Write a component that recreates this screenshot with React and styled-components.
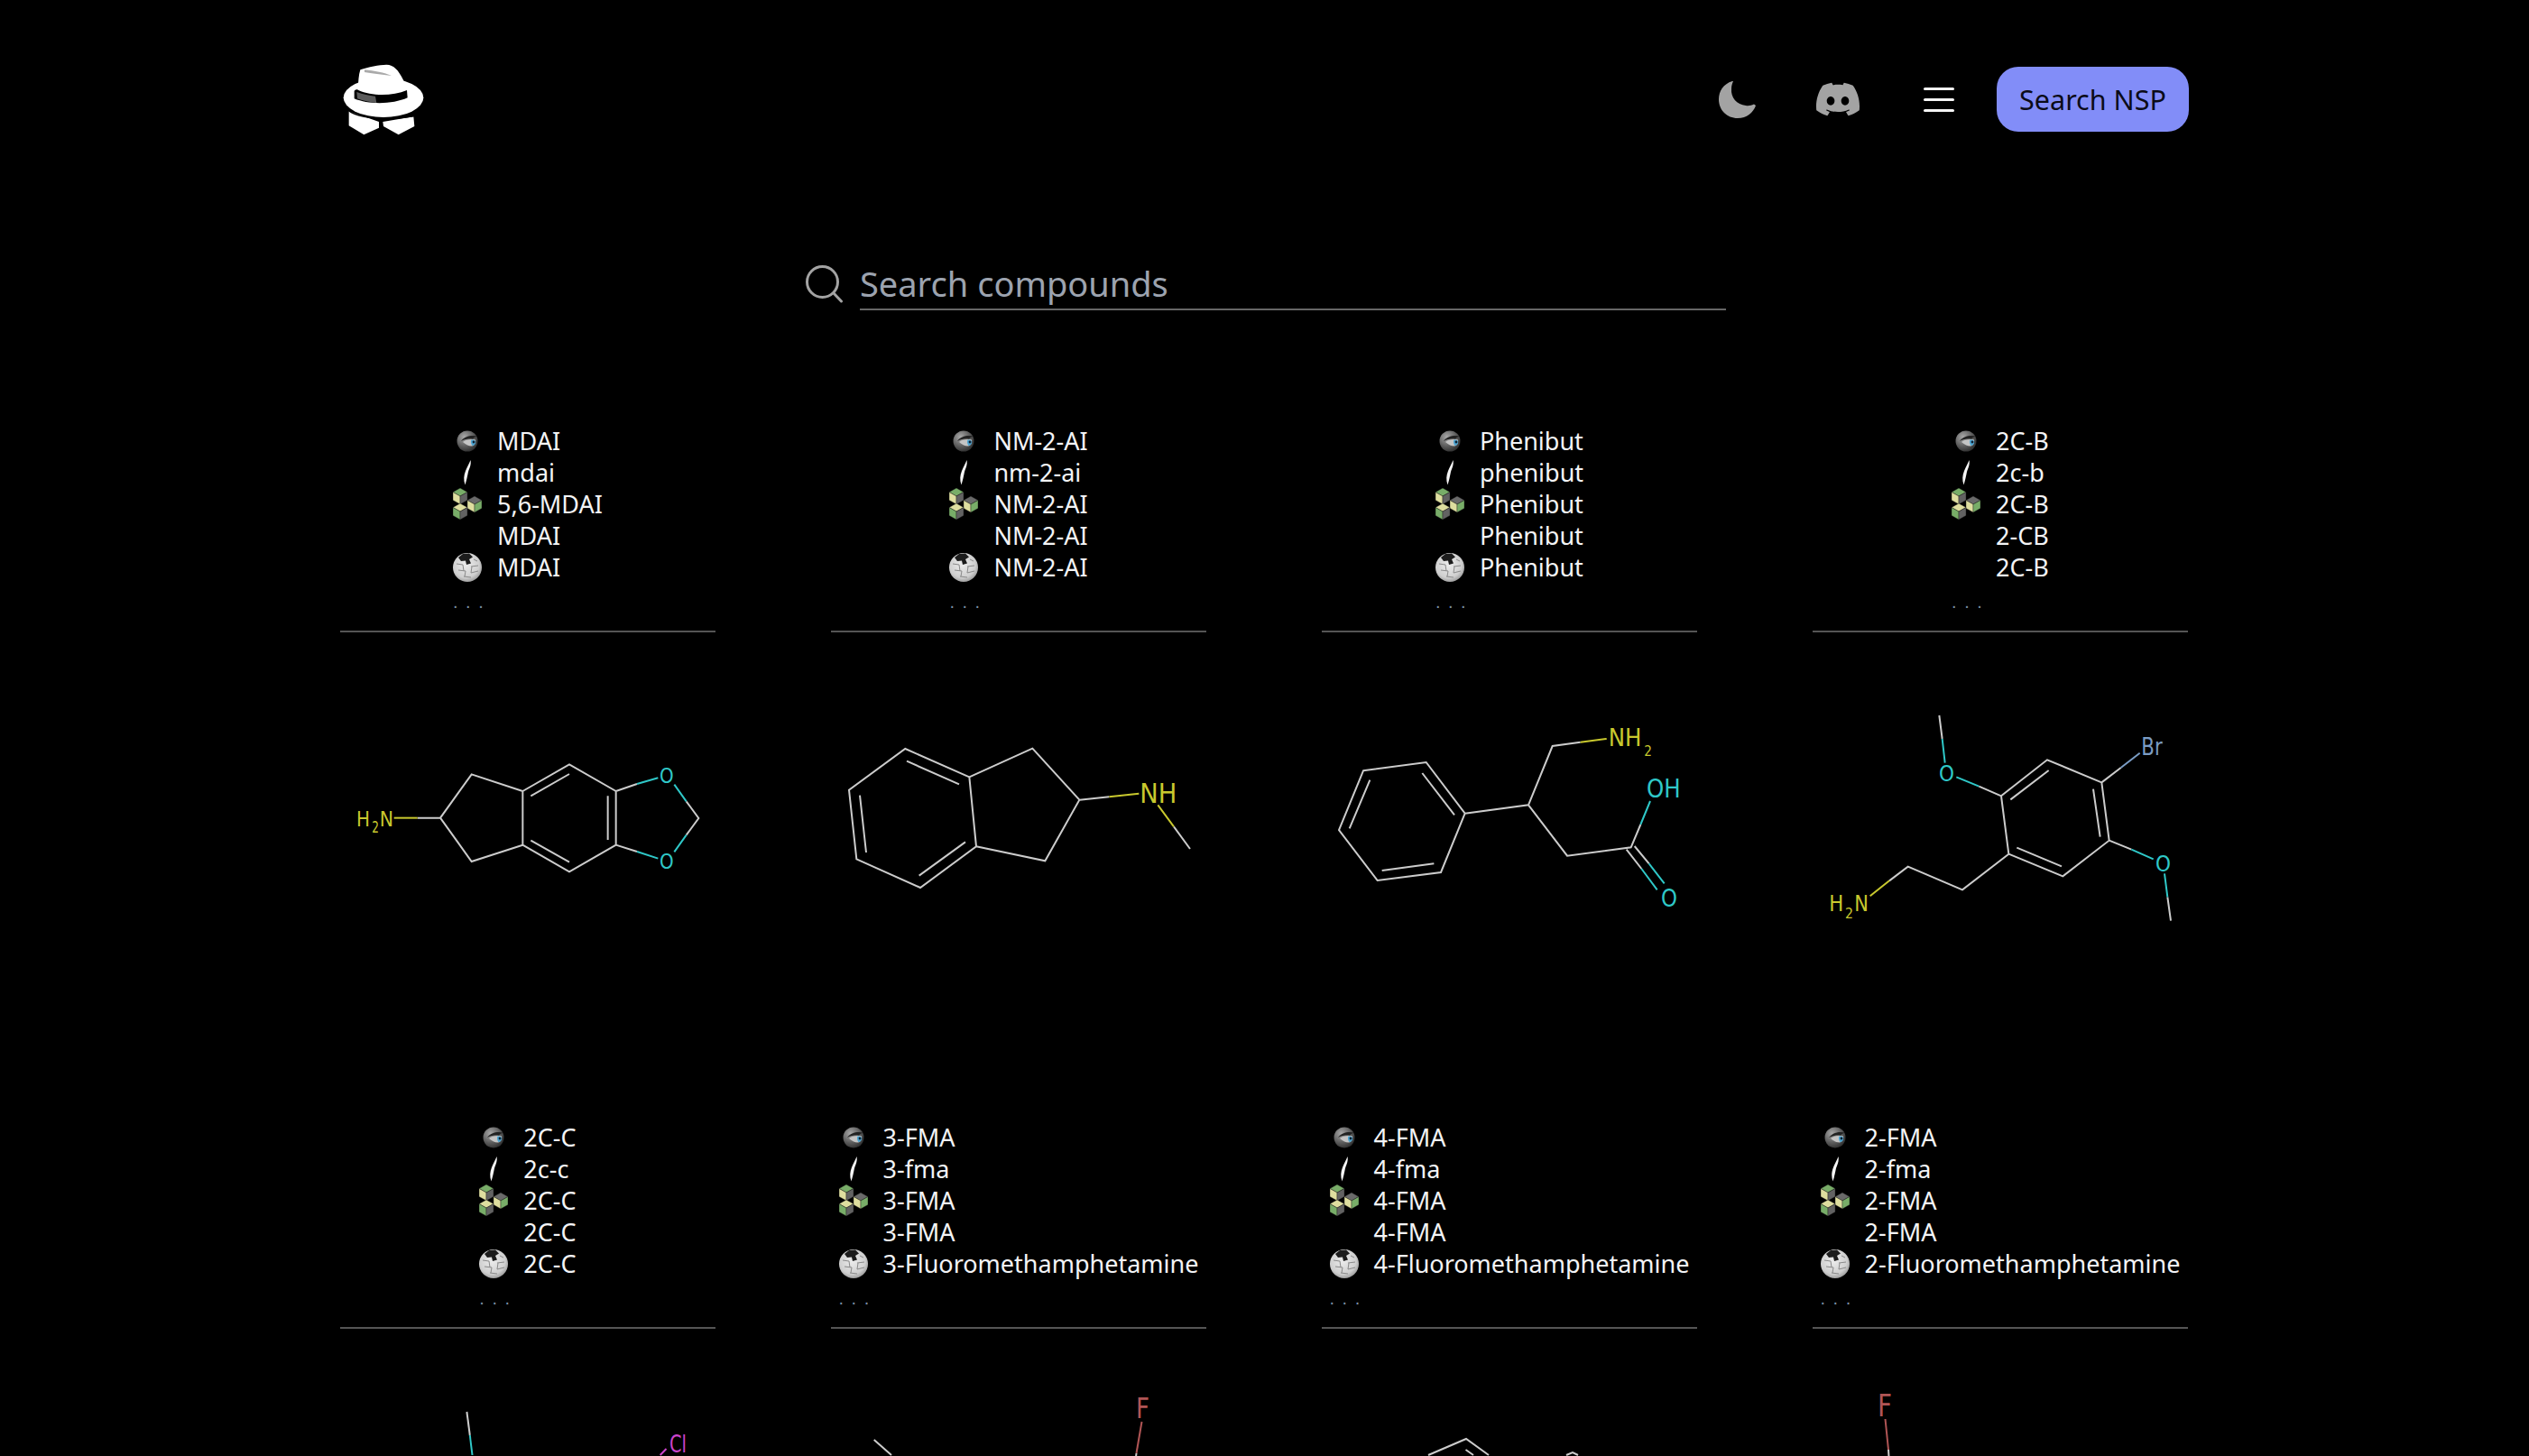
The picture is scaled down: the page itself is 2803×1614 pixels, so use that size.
import React from 'react';
import styled, {createGlobalStyle} from 'styled-components';
import {SiDiscord} from 'react-icons/si';

const GRAY = '#cccccc';
const YEL = '#c9c92e';
const CY = '#2fc8c8';
const BR = '#7a9cc4';
const RED = '#b05555';
const MAG = '#cc44cc';

// bonds and labels are written in the coordinates of the drawing's own viewBox
// label: x, baseline, text, colour, font size, drawn width
const mol1 = {
  vb: '21 -180 1248 1632', sw: 6,
  bonds: [
    [GRAY, 'M278 443L354 443L458 298L628 354L628 533L458 588L354 443M628 354L783 265L938 354L938 533L783 622L628 533M655 370L783 297M911 370L911 516M655 518L783 590M938 354L1008 330M938 533L1008 555M1172 388L1213 444L1172 500'],
    [YEL, 'M200 443L278 443'],
    [CY, 'M1008 330L1078 310M1132 332L1172 388M1172 500L1132 556M1008 555L1078 578'],
  ],
  labels: [[75, 470, 'H', YEL, 68, 45], [127, 493, '2', YEL, 54, 23], [152, 470, 'N', YEL, 68, 46], [1083, 326, 'O', CY, 71, 47], [1083, 612, 'O', CY, 71, 47]],
};
const mol2 = {
  vb: '30 -180 1248 1632', sw: 6,
  bonds: [
    [GRAY, 'M277 213L490 307L513 538L327 675L115 580L90 350ZM282 254L456 331M477 523L323 635M147 558L126 368M490 307L700 212L856 383L742 586L513 538M856 383L955 373M1170 472L1224 546'],
    [YEL, 'M955 373L1054 362M1117 400L1170 472'],
  ],
  labels: [[1057, 392, 'NH', YEL, 89, 123]],
};
const mol3 = {
  vb: '15 -180 1248 1632', sw: 6,
  bonds: [
    [GRAY, 'M153 286L362 258L491 428L411 624L200 651L72 483ZM349 294L456 433M388 595L215 618M107 478L175 317M491 428L702 400L782 204L875 191M702 400L831 569L1043 541L1075 465M1028 548L1078 612M1055 537L1103 595'],
    [YEL, 'M875 191L962 180'],
    [CY, 'M1075 465L1107 387M1078 612L1130 682M1103 595L1154 661'],
  ],
  labels: [[968, 205, 'NH', YEL, 82, 110], [1087, 237, '2', YEL, 50, 26], [1095, 375, 'OH', CY, 84, 113], [1143, 738, 'O', CY, 80, 54]],
};
const mol4 = {
  vb: '27 -180 1248 1632', sw: 6,
  bonds: [
    [GRAY, 'M654 370L807 250L988 325L1013 518L859 637L679 563ZM685 382L812 285M960 347L983 506M855 604L706 542M988 325L1052 276M654 370L580 338M458 180L448 102M1013 518L1087 548M1207 706L1218 785M679 563L525 682L344 605L282 652'],
    [BR, 'M1052 276L1115 227'],
    [CY, 'M580 338L505 307M467 260L458 180M1087 548L1160 580M1197 628L1207 706'],
    [YEL, 'M282 652L218 703'],
  ],
  labels: [[1120, 234, 'Br', BR, 78, 70], [447, 321, 'O', CY, 73, 51], [1167, 620, 'O', CY, 73, 51], [82, 752, 'H', YEL, 74, 48], [135, 778, '2', YEL, 48, 27], [166, 752, 'N', YEL, 74, 47]],
};
const mol5 = {
  vb: '377 1472 416 544', sw: 2,
  bonds: [[GRAY, 'M517.4 1566L520.8 1592'], [CY, 'M520.8 1592L523.5 1614'], [MAG, 'M738.5 1607L731.7 1614']],
  labels: [[742, 1611, 'Cl', MAG, 26, 19]],
};
const mol6 = {
  vb: '920 1472 416 544', sw: 2,
  bonds: [[GRAY, 'M967.7 1597L987 1614M1258.5 1612L1258 1616'], [RED, 'M1264.5 1577L1258.5 1612']],
  labels: [[1258, 1573, 'F', RED, 32, 15]],
};
const mol7 = {
  vb: '1465 1472 416 544', sw: 2,
  bonds: [[GRAY, 'M1583 1614L1625 1596L1650 1614M1624.5 1608L1633 1614M1736 1614L1743 1611L1749 1614']],
  labels: [],
};
const mol8 = {
  vb: '2009 1472 416 544', sw: 2,
  bonds: [[GRAY, 'M2093 1608L2093.5 1616'], [RED, 'M2089.5 1574L2093 1608']],
  labels: [[2081, 1571, 'F', RED, 33, 16]],
};

const cards = [
  {names: ['MDAI', 'mdai', '5,6-MDAI', 'MDAI', 'MDAI'], mol: mol1},
  {names: ['NM-2-AI', 'nm-2-ai', 'NM-2-AI', 'NM-2-AI', 'NM-2-AI'], mol: mol2},
  {names: ['Phenibut', 'phenibut', 'Phenibut', 'Phenibut', 'Phenibut'], mol: mol3},
  {names: ['2C-B', '2c-b', '2C-B', '2-CB', '2C-B'], mol: mol4, noWiki: true},
  {names: ['2C-C', '2c-c', '2C-C', '2C-C', '2C-C'], mol: mol5},
  {names: ['3-FMA', '3-fma', '3-FMA', '3-FMA', '3-Fluoromethamphetamine'], mol: mol6},
  {names: ['4-FMA', '4-fma', '4-FMA', '4-FMA', '4-Fluoromethamphetamine'], mol: mol7},
  {names: ['2-FMA', '2-fma', '2-FMA', '2-FMA', '2-Fluoromethamphetamine'], mol: mol8},
];

const EyeIcon = () => (
  <svg width="24" height="24" viewBox="0 0 24 24">
    <defs>
      <radialGradient id="eyeBall" cx="35%" cy="30%" r="80%">
        <stop offset="0%" stopColor="#a8a8a8" />
        <stop offset="55%" stopColor="#5e5e5e" />
        <stop offset="100%" stopColor="#262626" />
      </radialGradient>
    </defs>
    <circle cx="12" cy="12" r="11.5" fill="url(#eyeBall)" />
    <path d="M5 12C9 6.500 16 5 23 6.500C20 7.500 19 8.500 18 9.500C14 9 9 10 5 12Z" fill="#222" />
    <path d="M7 13C11 10 16 9.500 21 10.500C21.500 14 20 17 17 17.500C13 17.500 10 15.500 7 13Z" fill="#c4c4c4" />
    <path d="M16.500 10.500C20 10 21.500 11.500 21 14C20.500 16 19 17 17.500 17C16 15 15.500 12.500 16.500 10.500Z" fill="#4aa3d0" />
    <circle cx="19" cy="13" r="1.400" fill="#123" />
  </svg>
);

const FeatherIcon = () => (
  <svg width="10" height="28" viewBox="0 0 10 28">
    <path d="M8.500 0C9.500 5 7.500 8.500 6 13C5 18 4 23 2.500 27.500C0.500 22 1 17 3 12C4.500 8 7 4 8.500 0Z" fill="#f6f6f6" />
  </svg>
);

const Cube = ({x, y, top, left, right}) => (
  <g transform={`translate(${x} ${y})`} stroke="#1a1a1a" strokeWidth=".4">
    <path d="M8 0L16 4.500L8 9L0 4.500Z" fill={top} />
    <path d="M0 4.500L8 9L8 18L0 13.500Z" fill={left} />
    <path d="M16 4.500L8 9L8 18L16 13.500Z" fill={right} />
  </g>
);

const CubesIcon = () => (
  <svg width="32" height="35" viewBox="0 0 32 35">
    <Cube x={0} y={0} top="#78ad68" left="#dede9f" right="#626262" />
    <Cube x={16} y={9} top="#6a6a6a" left="#dede9f" right="#78ad68" />
    <Cube x={0} y={17} top="#dede9f" left="#78ad68" right="#626262" />
  </svg>
);

const WikiIcon = () => (
  <svg width="32" height="32" viewBox="0 0 32 32">
    <defs>
      <radialGradient id="wikiBall" cx="45%" cy="40%" r="70%">
        <stop offset="0%" stopColor="#ececec" />
        <stop offset="65%" stopColor="#cfcfcf" />
        <stop offset="100%" stopColor="#808080" />
      </radialGradient>
    </defs>
    <circle cx="16" cy="16" r="16" fill="url(#wikiBall)" />
    <path d="M11 1L6 5L9 9L14 8.500L15 13L20 11.500L18 7L22 4.500L18 0.500Z" fill="#1c1c1c" />
    <path d="M4 12L11 13M6 19L14 20M20 15L28 14M20 22L28 20M12 26L20 27M23 7L27 9M11 13L12 20M21 15L20 22M14 20L13 26" stroke="#8a8a8a" strokeWidth="1" fill="none" />
  </svg>
);

const Global = createGlobalStyle`
  html, body { margin: 0; height: 100%; overflow: hidden; background: #000; }
  body { font-family: "Noto Sans", "Open Sans", sans-serif; color: #f3f4f6; }
`;

const Page = styled.div`
  width: 2048px;
  margin-left: 377px;
  padding-top: 74px;
`;

const Header = styled.header`
  display: flex;
  align-items: center;
  justify-content: space-between;
  height: 72px;
  margin-right: -1px;
`;

const Logo = styled.svg`
  width: 90px;
  height: 80px;
  margin-left: 3px;
  display: block;
`;

const Actions = styled.div`
  display: flex;
  align-items: center;
`;

const MoonIcon = styled.svg`
  width: 42px;
  height: 42px;
  margin-right: 66px;
  fill: #a3a3a3;
`;

const DiscordIcon = styled(SiDiscord)`
  width: 48px;
  height: 48px;
  margin-right: 71px;
  color: #a3a3a3;
`;

const Burger = styled.div`
  display: flex;
  flex-direction: column;
  gap: 9px;
  width: 34px;
  margin-right: 47px;
  span { display: block; height: 3px; border-radius: 2px; background: #f5f5f5; }
`;

const SearchButton = styled.button`
  width: 213px;
  height: 72px;
  border: none;
  border-radius: 24px;
  background: #828df8;
  color: #0b0b18;
  font-family: inherit;
  font-size: 30.5px;
  padding: 0;
`;

const SearchRow = styled.div`
  display: flex;
  align-items: center;
  gap: 18px;
  width: 1020px;
  margin: 144px 0 0 516px;
`;

const SearchGlass = styled.svg`
  width: 42px;
  height: 42px;
  flex: none;
  margin-bottom: 4px;
`;

const SearchField = styled.div`
  flex: 1;
  height: 52px;
  line-height: 48px;
  border-bottom: 2px solid #666;
  color: #9ca3af;
  font-size: 38px;
`;

const Grid = styled.div`
  display: grid;
  grid-template-columns: repeat(4, 416px);
  column-gap: 128px;
  margin-top: 127px;
`;

const Card = styled.article`
  height: 772px;
`;

const Info = styled.div`
  height: 228px;
  display: flex;
  justify-content: center;
  border-bottom: 2px solid #555;
`;

const Names = styled.div`
  display: grid;
  grid-template-columns: 32px auto;
  column-gap: 17px;
  grid-auto-rows: 35px;
  align-content: start;
  font-size: 27px;
  line-height: 35px;
`;

const IconCell = styled.div`
  display: flex;
  align-items: center;
  justify-content: center;
`;

const Dots = styled.div`
  grid-column: 1 / 3;
  font-family: "Liberation Sans", sans-serif;
  font-size: 20px;
  line-height: 22px;
  letter-spacing: 8.500px;
  color: #7a8ea4;
  margin-top: 10px;
`;

const Molecule = styled.svg`
  display: block;
  width: 416px;
  height: 544px;
  margin-top: -2px;
`;

const Bond = styled.path`
  fill: none;
  stroke: ${p => p.$c};
  stroke-width: ${p => p.$w};
`;

const Atom = styled.text`
  font-family: "DejaVu Sans", sans-serif;
  fill: ${p => p.$c};
  font-size: ${p => p.$s}px;
`;

const rowIcons = [<EyeIcon />, <FeatherIcon />, <CubesIcon />, null, <WikiIcon />];

const App = () => (
  <Page>
    <Global />
    <Header>
      <Logo viewBox="120 90 270 240">
        <path d="M140 250L240 285L240 305L190 328L140 298ZM355 268L358 300L305 328L255 300L253 285Z" fill="#fff" />
        <ellipse cx="255" cy="205" rx="133" ry="65" fill="#fff" />
        <path d="M170 175C172 150 172 130 178 112C205 102 240 96 265 95C290 95 305 115 318 140C326 155 332 170 335 182C280 205 215 200 170 175Z" fill="#fff" />
        <path d="M192 112C225 115 258 122 282 132C250 128 215 124 192 120Z" fill="#aaa" />
        <path d="M158 182C165 176 170 178 172 180C215 200 285 200 333 180L335 205C285 228 205 228 158 208Z" fill="#000" />
        <path d="M166 186C186 194 208 198 228 200L232 222C210 220 188 216 168 208Z" fill="#5a5a5a" />
        <path d="M138 245C170 268 250 280 358 262L358 268C260 285 170 275 138 250Z" fill="#000" />
      </Logo>
      <Actions>
        <MoonIcon viewBox="0 0 42 42">
          <path d="M15 1C5 4 0 12 0 21C0 33 9 42 21 42C31 42 38 36 41 28L39 26.500C36 28 33 28.500 30 28C20 27 13 19 14 9C14 6 15 3 16 1Z" />
        </MoonIcon>
        <DiscordIcon />
        <Burger><span /><span /><span /></Burger>
        <SearchButton>Search NSP</SearchButton>
      </Actions>
    </Header>
    <SearchRow>
      <SearchGlass viewBox="0 0 42 42" fill="none" stroke="#a3a3a3" strokeWidth="3">
        <circle cx="18.500" cy="18.500" r="17" />
        <path d="M31 31L39.500 40" strokeLinecap="round" />
      </SearchGlass>
      <SearchField>Search compounds</SearchField>
    </SearchRow>
    <Grid>
      {cards.map(card => (
        <Card key={card.names[0]}>
          <Info>
            <Names>
              {card.names.map((name, i) => (
                <React.Fragment key={i}>
                  <IconCell>{card.noWiki && i === 4 ? null : rowIcons[i]}</IconCell>
                  <div>{name}</div>
                </React.Fragment>
              ))}
              <Dots>...</Dots>
            </Names>
          </Info>
          <Molecule viewBox={card.mol.vb}>
            {card.mol.bonds.map(([c, d]) => <Bond key={c} d={d} $c={c} $w={card.mol.sw} />)}
            {card.mol.labels.map(([x, y, t, c, s, w]) => (
              <Atom key={x} x={x} y={y} $c={c} $s={s} textLength={w} lengthAdjust="spacingAndGlyphs">{t}</Atom>
            ))}
          </Molecule>
        </Card>
      ))}
    </Grid>
  </Page>
);

export default App;
